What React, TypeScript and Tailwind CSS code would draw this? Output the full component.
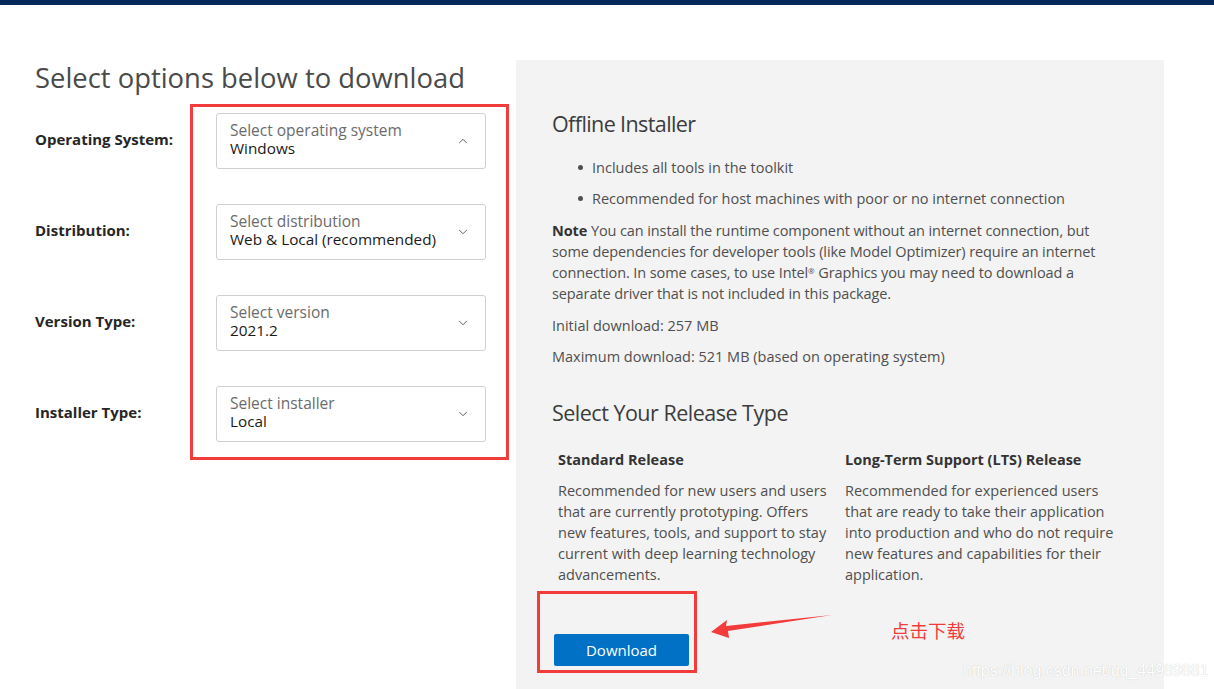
import { ChevronDown, ChevronUp } from 'lucide-react'

const selects = [
  { label: 'Operating System:', hint: 'Select operating system', value: 'Windows', open: true },
  { label: 'Distribution:', hint: 'Select distribution', value: 'Web & Local (recommended)', open: false },
  { label: 'Version Type:', hint: 'Select version', value: '2021.2', open: false },
  { label: 'Installer Type:', hint: 'Select installer', value: 'Local', open: false },
]

function SelectRow({ label, hint, value, open }: { label: string; hint: string; value: string; open: boolean }) {
  return (
    <div className="flex items-center">
      <div className="mt-[-4px] w-[181px] text-[15px] font-bold text-[#262626]">{label}</div>
      <div className="flex h-[56px] w-[270px] items-center justify-between rounded-[3px] border border-[#d0d0d0] bg-white pl-[13px] pr-[15px]">
        <div className="mt-[-5px] flex flex-col leading-[18px]">
          <span className="text-[15.5px] text-[#6b6b6b]">{hint}</span>
          <span className="text-[15.3px] text-[#1a1a1a]">{value}</span>
        </div>
        {open ? (
          <ChevronUp className="h-[14px] w-[14px] text-[#555]" strokeWidth={1.6} />
        ) : (
          <ChevronDown className="h-[14px] w-[14px] text-[#555]" strokeWidth={1.6} />
        )}
      </div>
    </div>
  )
}

export default function App() {
  return (
    <div className="relative h-[689px] w-[1214px] overflow-hidden bg-white font-['Open_Sans','Noto_Sans',sans-serif]">
      <div className="h-[5px] bg-[#00285a]" />
      <div className="flex">
        {/* left: selectors */}
        <div className="w-[516px] pl-[35px] pt-[56px]">
          <h1 className="text-[27.4px] leading-[34px] text-[#4a4a4a]">Select options below to download</h1>
          <div className="relative mt-[18px] flex flex-col gap-[35px]">
            {selects.map((s) => (
              <SelectRow key={s.label} {...s} />
            ))}
            <div className="pointer-events-none absolute left-[155px] top-[-9px] h-[356px] w-[319px] border-[3px] border-[#f23b3b]" />
          </div>
        </div>

        {/* right: info panel */}
        <div className="mt-[55px] h-[634px] w-[648px] bg-[#f3f3f3] pl-[36px] pr-[40px] pt-[51px] text-[14.5px] text-[#4f4f4f]">
          <h2 className="text-[21.5px] leading-[26px] tracking-[-0.6px] text-[#3c3c3c]">Offline Installer</h2>
          <ul className="mt-[20px] flex flex-col gap-[10px] pl-[26px] leading-[21px]">
            <li className="flex items-center gap-[9px]">
              <span className="h-[5px] w-[5px] rounded-full bg-[#4f4f4f]" />
              Includes all tools in the toolkit
            </li>
            <li className="flex items-center gap-[9px]">
              <span className="h-[5px] w-[5px] rounded-full bg-[#4f4f4f]" />
              Recommended for host machines with poor or no internet connection
            </li>
          </ul>
          <p className="mt-[11px] max-w-[560px] leading-[21px] tracking-[-0.1px]">
            <b className="font-bold text-[#333]">Note</b> You can install the runtime component without an internet connection, but
            some dependencies for developer tools (like Model Optimizer) require an internet connection. In some cases, to use
            Intel<sup className="text-[8px]">®</sup> Graphics you may need to download a separate driver that is not included in this
            package.
          </p>
          <p className="mt-[11px] leading-[21px]">Initial download: 257 MB</p>
          <p className="mt-[10px] leading-[21px]">Maximum download: 521 MB (based on operating system)</p>

          <h2 className="mt-[33px] text-[21.5px] font-medium leading-[26px] tracking-[-0.5px] text-[#3c3c3c]">Select Your Release Type</h2>
          <div className="mt-[23px] grid grid-cols-[287px_1fr] pl-[6px]">
            <div>
              <h3 className="text-[14.5px] font-bold leading-[21px] text-[#333]">Standard Release</h3>
              <p className="mt-[10px] w-[270px] leading-[21px]">
                Recommended for new users and users that are currently prototyping. Offers new features, tools, and support to stay
                current with deep learning technology advancements.
              </p>
            </div>
            <div>
              <h3 className="text-[14.5px] font-bold leading-[21px] text-[#333]">Long-Term Support (LTS) Release</h3>
              <p className="mt-[10px] w-[270px] leading-[21px]">
                Recommended for experienced users that are ready to take their application into production and who do not require new
                features and capabilities for their application.
              </p>
            </div>
          </div>

          <div className="relative mt-[49px] flex items-start">
            <button className="relative ml-[2px] h-[32px] w-[135px] rounded-[2px] bg-[#0071c5] text-[15px] text-white">
              Download
              <span className="pointer-events-none absolute left-[-17px] top-[-43px] h-[82px] w-[160px] border-[3px] border-[#f23b3b]" />
            </button>
            <svg className="ml-[22px] mt-[-20px]" width="124" height="30" viewBox="0 0 124 30">
              <path d="M0 18 L16 6 L15 12 L121 1 L17 17 L18 24 Z" fill="#f23b3b" />
            </svg>
            <span className="ml-[56px] mt-[-16px] font-['Noto_Sans_CJK_SC',sans-serif] text-[18.5px] leading-[24px] text-[#f23b3b]">
              点击下载
            </span>
          </div>
        </div>
      </div>
      <div className="absolute left-[963px] top-[659px] font-['Liberation_Sans',sans-serif] text-[16px] text-white [text-shadow:0_0_1px_#bbb]">
        https://blog.csdn.net/qq_44989881
      </div>
    </div>
  )
}
